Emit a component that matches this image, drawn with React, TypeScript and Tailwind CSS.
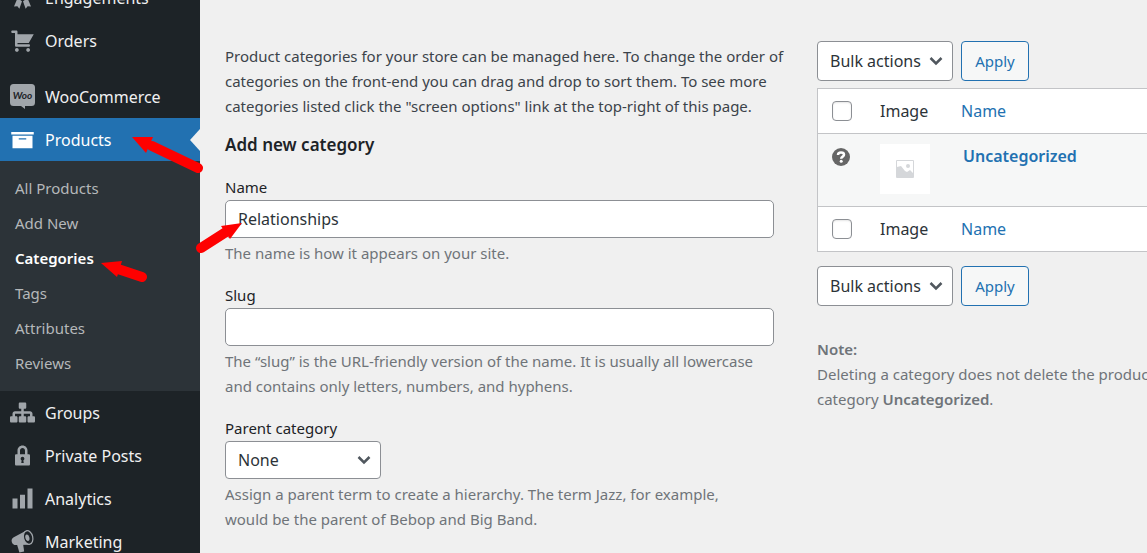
import type { ReactNode } from "react";

type MenuItem = { label: string; icon: ReactNode };

const topItems: MenuItem[] = [
  { label: "Engagements", icon: <Dashicon d="M6 10.500 3.200 17.200l2.700-.3L7.500 19l2.100-6zM14 10.500l2.800 6.700-2.700-.3-1.600 2.100-2.100-6z" /> },
  {
    label: "Orders",
    icon: (
      <Dashicon d="M6 13h9c.55 0 1 .45 1 1s-.45 1-1 1H5c-.55 0-1-.45-1-1V4H2c-.55 0-1-.45-1-1s.45-1 1-1h3c.55 0 1 .45 1 1v2h13l-4 7H6v1zm-.5 3c.83 0 1.5.67 1.5 1.5S6.33 19 5.5 19 4 18.33 4 17.5 4.67 16 5.5 16zm9 0c.83 0 1.5.67 1.5 1.5s-.67 1.5-1.5 1.5-1.5-.67-1.5-1.5.67-1.5 1.5-1.5z" />
    ),
  },
];

const submenu = ["All Products", "Add New", "Categories", "Tags", "Attributes", "Reviews"];

const bottomItems: MenuItem[] = [
  {
    label: "Groups",
    icon: (
      <Dashicon d="M18 13h1c.55 0 1 .45 1 1.01v2.98c0 .56-.45 1.01-1 1.01h-4c-.55 0-1-.45-1-1.01v-2.98c0-.56.45-1.01 1-1.01h1v-2h-5v2h1c.55 0 1 .45 1 1.01v2.98c0 .56-.45 1.01-1 1.01H8c-.55 0-1-.45-1-1.01v-2.98c0-.56.45-1.01 1-1.01h1v-2H4v2h1c.55 0 1 .45 1 1.01v2.98C6 17.55 5.55 18 5 18H1c-.55 0-1-.45-1-1.01v-2.98C0 13.45.45 13 1 13h1v-2c0-1.1.9-2 2-2h5V7H8c-.55 0-1-.45-1-1.01V3.01C7 2.45 7.45 2 8 2h4c.55 0 1 .45 1 1.01v2.98C13 6.55 12.55 7 12 7h-1v2h5c1.1 0 2 .9 2 2v2z" />
    ),
  },
  {
    label: "Private Posts",
    icon: (
      <Dashicon d="M14 9h1c.55 0 1 .45 1 1v7c0 .55-.45 1-1 1H5c-.55 0-1-.45-1-1v-7c0-.55.45-1 1-1h1V6c0-2.21 1.79-4 4-4s4 1.79 4 4v3zm-2 0V6c0-1.1-.9-2-2-2s-2 .9-2 2v3h4zm-1 7l-.36-2.15c.51-.24.86-.75.86-1.35 0-.83-.67-1.5-1.5-1.5s-1.5.67-1.5 1.5c0 .6.35 1.11.86 1.35L9 16h2z" />
    ),
  },
  { label: "Analytics", icon: <Dashicon d="M18 18V2h-4v16h4zm-6 0V7H8v11h4zm-6 0v-8H2v8h4z" /> },
  { label: "Marketing", icon: <MegaphoneIcon /> },
];

export default function App() {
  return (
    <div className="relative flex h-screen overflow-hidden bg-[#f0f0f0] font-['Noto_Sans',sans-serif] text-[15px] leading-[25px] text-[#3c434a]">
      <Sidebar />
      <main className="flex min-w-0 flex-1 gap-6 pt-[41px] pl-[25px]">
        <AddCategory />
        <CategoryList />
      </main>
      <Arrows />
    </div>
  );
}

function Sidebar() {
  return (
    <nav className="-mt-6 w-[200px] shrink-0 bg-[#1d2327] text-base text-[#f0f0f1]">
      {topItems.map((item) => (
        <MenuLink key={item.label} {...item} />
      ))}
      <div className="h-[13px]" />
      <MenuLink label="WooCommerce" icon={<WooIcon />} />
      <a href="#products" className="flex h-[43px] items-center bg-[#2271b1] pl-[10px] text-white">
        <Dashicon d="M19 4v2H1V4h18zM2 7h16v10H2V7zm11 3V9H7v1h6z" />
        <span className="ml-[10px] flex-1">Products</span>
        <svg viewBox="0 0 10 22" className="h-[22px] w-[10px] fill-[#f0f0f0]">
          <path d="M10 0v22L0 11z" />
        </svg>
      </a>
      <ul className="bg-[#2c3338] py-[10px] text-[15px]">
        {submenu.map((label) => (
          <li key={label}>
            <a
              href="#submenu"
              className={`flex h-[35px] items-center pl-[15px] ${label === "Categories" ? "font-semibold text-white" : "text-[#b5b8ba]"}`}
            >
              {label}
            </a>
          </li>
        ))}
      </ul>
      {bottomItems.map((item) => (
        <MenuLink key={item.label} {...item} />
      ))}
    </nav>
  );
}

function MenuLink({ label, icon }: MenuItem) {
  return (
    <a href="#menu" className="flex h-[43px] items-center gap-[10px] pl-[10px]">
      <span className="text-[#a0a5aa]">{icon}</span>
      {label}
    </a>
  );
}

function AddCategory() {
  return (
    <section className="w-[568px] shrink-0 pt-[3px]">
      <p className="whitespace-nowrap">
        Product categories for your store can be managed here. To change the order of
        <br />
        categories on the front-end you can drag and drop to sort them. To see more
        <br />
        categories listed click the "screen options" link at the top-right of this page.
      </p>
      <h2 className="mt-[13px] text-[17px] font-semibold text-[#1d2327]">Add new category</h2>
      <form className="mt-[18px] grid gap-[17px]">
        <Field id="name" label="Name" help="The name is how it appears on your site.">
          <input id="name" defaultValue="Relationships" className="h-[38px] w-[549px] rounded-[5px] border border-[#8c8f94] bg-white px-3 text-base text-[#2c3338]" />
        </Field>
        <Field
          id="slug"
          label="Slug"
          help={
            <>
              The “slug” is the URL-friendly version of the name. It is usually all lowercase
              <br />
              and contains only letters, numbers, and hyphens.
            </>
          }
        >
          <input id="slug" className="h-[38px] w-[549px] rounded-[5px] border border-[#8c8f94] bg-white px-3 text-base text-[#2c3338]" />
        </Field>
        <Field
          id="parent"
          label="Parent category"
          help={
            <>
              Assign a parent term to create a hierarchy. The term Jazz, for example,
              <br />
              would be the parent of Bebop and Big Band.
            </>
          }
        >
          <div className="grid w-[156px] items-center">
            <select id="parent" className="col-start-1 row-start-1 h-[38px] appearance-none rounded-[4px] border border-[#8c8f94] bg-white pl-3 text-base text-[#2c3338]">
              <option>None</option>
            </select>
            <Chevron />
          </div>
        </Field>
      </form>
    </section>
  );
}

function Field({ id, label, help, children }: { id: string; label: string; help: ReactNode; children: ReactNode }) {
  return (
    <div className="flex flex-col whitespace-nowrap">
      <label htmlFor={id} className="text-[#1d2327]">{label}</label>
      {children}
      <p className="mt-[3px] text-[#6f7479]">{help}</p>
    </div>
  );
}

function CategoryList() {
  return (
    <section className="min-w-0 flex-1">
      <BulkActions />
      <table className="mt-[7px] mb-[14px] w-full border-separate border-spacing-0 border-y border-l border-[#c3c4c7] bg-white text-left text-base">
        <thead>
          <tr>
            <HeaderCells edge="border-b" />
          </tr>
        </thead>
        <tbody>
          <tr className="bg-[#f6f7f7] align-top">
            <td className="h-[72px] pt-[14px] pl-[14px]">
              <HelpTip />
            </td>
            <td className="pt-[10px]">
              <div className="flex size-[50px] items-center justify-center bg-white">
                <Placeholder />
              </div>
            </td>
            <td className="pt-[10px] pl-[2px]">
              <a href="#uncategorized" className="font-semibold text-[#2271b1]">Uncategorized</a>
            </td>
          </tr>
        </tbody>
        <tfoot>
          <tr>
            <HeaderCells edge="border-t" />
          </tr>
        </tfoot>
      </table>
      <BulkActions />
      <p className="mt-[31px] whitespace-nowrap text-[#6f7479]">
        <strong className="font-semibold">Note:</strong>
        <br />
        Deleting a category does not delete the products
        <br />
        category <strong className="font-semibold">Uncategorized</strong>.
      </p>
    </section>
  );
}

function HeaderCells({ edge }: { edge: "border-b" | "border-t" }) {
  return (
    <>
      <th className={`h-[45px] w-[62px] border-[#c3c4c7] pl-[14px] ${edge}`}>
        <input type="checkbox" aria-label="Select all" className="block size-5 appearance-none rounded-[4px] border border-[#8c8f94] bg-white shadow-[inset_0_1px_2px_rgba(0,0,0,0.1)]" />
      </th>
      <th className={`w-[81px] border-[#c3c4c7] font-normal text-[#2c3338] ${edge}`}>Image</th>
      <th className={`border-[#c3c4c7] font-normal ${edge}`}>
        <a href="#sort" className="text-[#2271b1]">Name</a>
      </th>
    </>
  );
}

function BulkActions() {
  return (
    <div className="flex gap-2">
      <div className="grid w-[136px] items-center">
        <select aria-label="Bulk actions" className="col-start-1 row-start-1 h-10 appearance-none rounded-[4px] border border-[#8c8f94] bg-white pl-3 text-base text-[#2c3338]">
          <option>Bulk actions</option>
        </select>
        <Chevron />
      </div>
      <button type="button" className="h-10 w-[68px] rounded-[4px] border border-[#2271b1] bg-[#f6f7f7] text-[#2271b1]">
        Apply
      </button>
    </div>
  );
}

function Dashicon({ d }: { d: string }) {
  return (
    <svg viewBox="0 0 20 20" className="size-[25px] shrink-0 fill-current" aria-hidden="true">
      <path d={d} />
    </svg>
  );
}

function MegaphoneIcon() {
  return (
    <svg viewBox="0 0 20 20" className="size-[25px] shrink-0 fill-current" aria-hidden="true">
      <path d="M13.500 1 3 6.500C1.300 7.500 1 9 1.500 10.500S3.300 13 5 12.800l11-.3z" />
      <path d="M5.500 12h5l.8 6-3.800.8z" />
      <ellipse cx="14.500" cy="6.800" rx="3.700" ry="5.500" transform="rotate(-14 14.500 6.800)" className="fill-[#1d2327] stroke-current" />
      <ellipse cx="13.900" cy="7" rx="1.600" ry="2.600" transform="rotate(-14 13.900 7)" />
    </svg>
  );
}

function WooIcon() {
  return (
    <svg viewBox="0 0 25 25" className="size-[25px]" aria-hidden="true">
      <path d="M3.500 0h18A3.500 3.500 0 0 1 25 3.500v15a3.500 3.500 0 0 1-3.500 3.500H15v3l-4-3H3.500A3.500 3.500 0 0 1 0 18.500v-15A3.500 3.500 0 0 1 3.500 0z" className="fill-[#a0a5aa]" />
      <text x="12.500" y="14.500" textAnchor="middle" className="fill-[#1d2327] font-['Lato',sans-serif] text-[10px] font-bold italic">Woo</text>
    </svg>
  );
}

function Chevron() {
  return (
    <svg viewBox="0 0 20 20" className="pointer-events-none col-start-1 row-start-1 mr-[7px] size-5 justify-self-end fill-none stroke-[#50575e]" aria-hidden="true">
      <path d="M4.500 7l5.500 5.500L15.500 7" strokeWidth="2.500" />
    </svg>
  );
}

function HelpTip() {
  return (
    <svg viewBox="0 0 18 18" className="size-[18px]" aria-hidden="true">
      <circle cx="9" cy="9" r="9" className="fill-[#666]" />
      <path d="M6 7C6 5 7.400 4.600 9 4.600s3 .6 3 2.200c0 2-2.800 1.700-2.800 4" className="fill-none stroke-white stroke-[2.500]" />
      <circle cx="9.200" cy="13.300" r="1.500" className="fill-white" />
    </svg>
  );
}

function Placeholder() {
  return (
    <svg viewBox="0 0 18 18" className="size-[18px]" aria-hidden="true">
      <path d="M.5.5h17v17H.5z" className="fill-white stroke-[#d5d7da]" />
      <path d="M1 7l4-1 4 5 2 1 3-2 3 3v4H1z" className="fill-[#d5d7da]" />
      <circle cx="12" cy="6" r="2" className="fill-[#d5d7da]" />
    </svg>
  );
}

// red callouts that lie over the menu and the form
function Arrows() {
  return (
    <svg viewBox="0 0 260 300" className="pointer-events-none absolute top-0 left-0 h-[300px] w-[260px] fill-[#fe0000] stroke-[#fe0000]" aria-hidden="true">
      <g strokeWidth="10" strokeLinecap="round">
        <path d="M152 146l46 22M118 269l24 8M226 232l-25 16" />
      </g>
      <g stroke="none">
        <path d="M132 137h21l-7 16z" />
        <path d="M101 263l21-2-5 16z" />
        <path d="M242 223l-21 3 9 13z" />
      </g>
    </svg>
  );
}
